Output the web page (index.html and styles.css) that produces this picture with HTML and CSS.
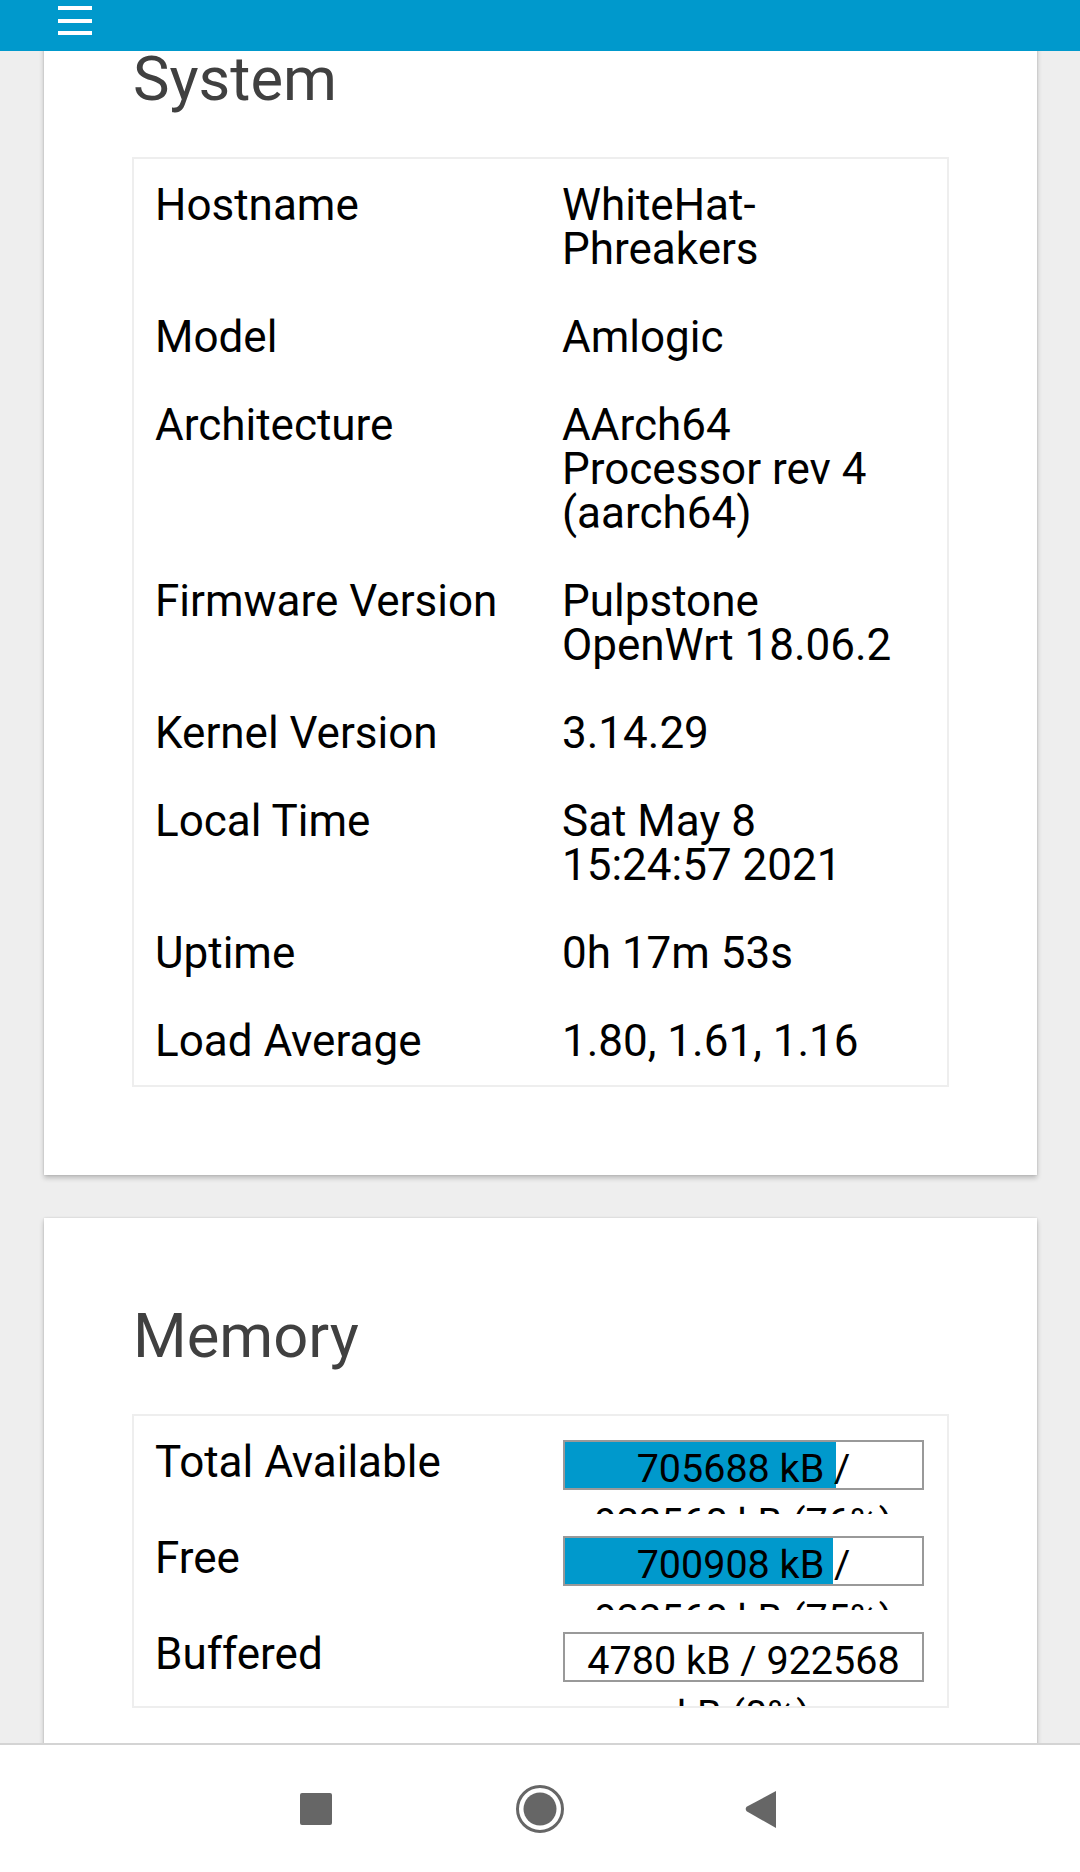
FILE: index.html
```html
<!DOCTYPE html>
<html lang="en">
<head>
<meta charset="utf-8">
<title>Status</title>
<link rel="stylesheet" href="styles.css">
</head>
<body>
<header class="topbar">
  <div class="menu-btn"><span></span><span></span><span></span></div>
</header>
<main class="viewport">
  <div class="scroller">
    <section class="card">
      <h2 class="card-title">System</h2>
      <div class="info-table">
        <div class="row"><div class="key">Hostname</div><div class="val">WhiteHat-Phreakers</div></div>
        <div class="row"><div class="key">Model</div><div class="val">Amlogic</div></div>
        <div class="row"><div class="key">Architecture</div><div class="val">AArch64 Processor rev 4 (aarch64)</div></div>
        <div class="row"><div class="key">Firmware Version</div><div class="val">Pulpstone OpenWrt 18.06.2</div></div>
        <div class="row"><div class="key">Kernel Version</div><div class="val">3.14.29</div></div>
        <div class="row"><div class="key">Local Time</div><div class="val">Sat May 8 15:24:57 2021</div></div>
        <div class="row"><div class="key">Uptime</div><div class="val">0h 17m 53s</div></div>
        <div class="row"><div class="key">Load Average</div><div class="val">1.80, 1.61, 1.16</div></div>
      </div>
    </section>
    <section class="card">
      <h2 class="card-title">Memory</h2>
      <div class="info-table">
        <div class="row bar-row"><div class="key">Total Available</div><div class="val"><div class="meter"><div class="meter-fill" style="width:76%"></div><div class="meter-text">705688 kB / 922568 kB (76%)</div></div></div></div>
        <div class="row bar-row"><div class="key">Free</div><div class="val"><div class="meter"><div class="meter-fill" style="width:75%"></div><div class="meter-text">700908 kB / 922568 kB (75%)</div></div></div></div>
        <div class="row bar-row"><div class="key">Buffered</div><div class="val"><div class="meter"><div class="meter-fill" style="width:0%"></div><div class="meter-text">4780 kB / 922568 kB (0%)</div></div></div></div>
      </div>
    </section>
  </div>
</main>
<nav class="navbar">
  <svg class="nav-icon" viewBox="0 0 56 56" width="56" height="56"><rect x="12" y="12" width="32" height="32" rx="2" fill="#666"/></svg>
  <svg class="nav-icon" viewBox="0 0 56 56" width="56" height="56"><circle cx="28" cy="28" r="22.5" fill="none" stroke="#666" stroke-width="3"/><circle cx="28" cy="28" r="16.5" fill="#666"/></svg>
  <svg class="nav-icon" viewBox="0 0 56 56" width="56" height="56"><path d="M40 10 L40 47 L10.6 30.2 Q8.8 28 10.6 25.8 Z" fill="#666"/></svg>
</nav>
</body>
</html>
```
FILE: styles.css
```css
html, body {
  margin: 0;
  padding: 0;
}
body {
  width: 1080px;
  height: 1872px;
  overflow: hidden;
  display: flex;
  flex-direction: column;
  background: #eeeeee;
  font-family: Roboto, "Noto Sans", "Liberation Sans", sans-serif;
  color: #000;
}
.topbar {
  height: 51px;
  flex: 0 0 51px;
  background: #0099cc;
  position: relative;
  z-index: 2;
}
.menu-btn {
  margin-left: 58px;
  padding-top: 6px;
  width: 34px;
  display: flex;
  flex-direction: column;
  gap: 8.5px;
}
.menu-btn span {
  display: block;
  height: 4px;
  background: #fff;
}
.viewport {
  flex: 1 1 auto;
  overflow: hidden;
  position: relative;
}
.scroller {
  margin-top: -90px;
  padding: 0 43px 0 44px;
  display: flex;
  flex-direction: column;
  gap: 43px;
}
.card {
  background: #fff;
  padding: 82px 88px 88px 88px;
  box-shadow: 0 3px 5px rgba(0, 0, 0, 0.22), 0 0 2px rgba(0, 0, 0, 0.12);
}
.card-title {
  margin: 0 0 42px 0;
  font-size: 61.5px;
  line-height: 72px;
  font-weight: 400;
  color: #404040;
  padding-left: 1px;
}
.info-table {
  border: 2px solid #eeeeee;
  padding-top: 2px;
}
.row {
  display: grid;
  grid-template-columns: 428px 345px;
  padding: 22px 0;
  font-size: 44px;
  line-height: 44px;
  overflow: hidden;
}
.key {
  padding-left: 21px;
}
.bar-row {
  padding: 22px 0;
}
.bar-row .val {
  height: 52px;
}
.meter {
  position: relative;
  box-sizing: border-box;
  width: 361px;
  height: 50px;
  margin-left: 1px;
  border: 2px solid #999;
  background: #fff;
}
.meter-fill {
  height: 100%;
  background: #0099cc;
}
.meter-text {
  position: absolute;
  top: 0;
  left: 0;
  right: 0;
  padding: 0 6px;
  text-align: center;
  font-size: 39.5px;
  line-height: 54px;
  color: #000;
}
.navbar {
  flex: 0 0 127px;
  height: 127px;
  border-top: 2px solid #d4d4d4;
  background: #fff;
  display: flex;
  justify-content: center;
  align-items: center;
  gap: 168px;
  position: relative;
  z-index: 2;
}
.nav-icon {
  display: block;
}
```
